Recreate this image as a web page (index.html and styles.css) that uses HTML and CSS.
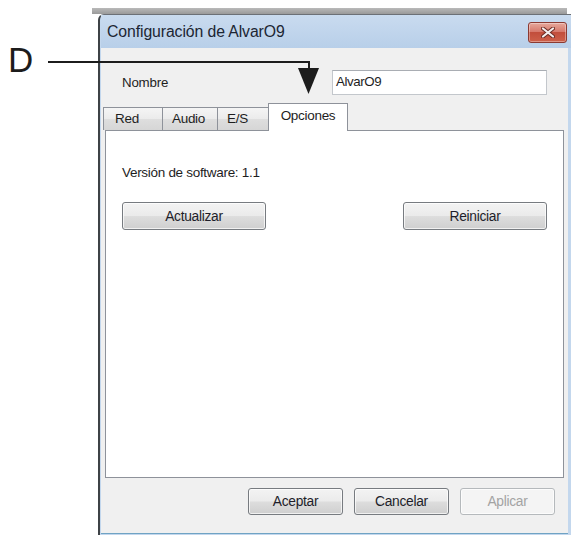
FILE: index.html
```html
<!DOCTYPE html>
<html lang="es">
<head>
<meta charset="utf-8">
<title>Configuración de AlvarO9</title>
<link rel="stylesheet" href="styles.css">
</head>
<body>
<div class="screen">
  <div class="behind-bar"></div>
  <div class="window">
    <div class="titlebar">
      <span class="title">Configuración de AlvarO9</span>
      <button class="close" aria-label="Cerrar">
        <svg width="14" height="11" viewBox="0 0 14 11">
          <path d="M2 1.5 L12 9.5 M12 1.5 L2 9.5" stroke="#6a2a22" stroke-width="4" stroke-linecap="round"/>
          <path d="M2 1.5 L12 9.5 M12 1.5 L2 9.5" stroke="#f4eeee" stroke-width="2.2" stroke-linecap="round"/>
        </svg>
      </button>
    </div>
    <div class="client">
      <div class="name-row">
        <label class="name-label">Nombre</label>
        <div class="textbox">AlvarO9</div>
      </div>
      <div class="tabs">
        <div class="tab tab-red">Red</div>
        <div class="tab tab-audio">Audio</div>
        <div class="tab tab-io">E/S</div>
        <div class="tab tab-active">Opciones</div>
      </div>
      <div class="panel">
        <p class="version">Versión de software: 1.1</p>
        <div class="panel-actions">
          <button class="btn btn-wide">Actualizar</button>
          <button class="btn btn-wide">Reiniciar</button>
        </div>
      </div>
      <div class="footer">
        <button class="btn btn-dialog">Aceptar</button>
        <button class="btn btn-dialog">Cancelar</button>
        <button class="btn btn-dialog btn-disabled">Aplicar</button>
      </div>
    </div>
    <div class="frame-bottom"></div>
  </div>

  <span class="callout-letter">D</span>
  <svg class="callout" width="571" height="535" viewBox="0 0 571 535">
    <path d="M48 62 H309 V70" fill="none" stroke="#1c1c1c" stroke-width="2"/>
    <polygon points="298,68 319,68 308.5,94" fill="#1c1c1c"/>
  </svg>
</div>
</body>
</html>
```

FILE: styles.css
```css
* {
  box-sizing: border-box;
}

html, body {
  margin: 0;
  padding: 0;
  background: #ffffff;
}

body {
  font-family: "Liberation Sans", Arial, sans-serif;
  font-size: 13.5px;
  color: #1e1e1e;
}

.screen {
  position: relative;
  width: 571px;
  height: 535px;
  overflow: hidden;
}

/* edge of the window lying behind the dialog */
.behind-bar {
  margin: 8px 0 0 92px;
  width: 475px;
  height: 6px;
  background: linear-gradient(#b9b9b9, #9a9a9a);
}

.window {
  margin-left: 98px;
  width: 478px;
  border-left: 2px solid #3e4246;
  border-top: 1px solid #6c7076;
  border-top-left-radius: 6px;
  background: #c3d7ed;
  padding: 0 8px 0 1px;
}

.titlebar {
  height: 33px;
  display: flex;
  align-items: center;
  justify-content: space-between;
  padding: 1px 9px 0 6px;
  margin-right: -8px;
  background: linear-gradient(#c9dbef, #b8cfe9);
}

.title {
  font-size: 15.8px;
  color: #1c2633;
  letter-spacing: -0.1px;
}

.close {
  width: 39px;
  height: 21px;
  border: 1px solid #8b3a32;
  border-radius: 3px;
  padding: 0;
  display: flex;
  align-items: center;
  justify-content: center;
  background: linear-gradient(#e6a89c 0%, #d77a6d 45%, #c24e3c 50%, #cd604a 100%);
  box-shadow: inset 0 0 0 1px rgba(255, 255, 255, 0.35);
}

.client {
  height: 485px;
  background: #f0f0f0;
  display: flex;
  flex-direction: column;
}

.name-row {
  display: flex;
  align-items: center;
  margin-top: 22px;
  padding-left: 21px;
}

.name-label {
  width: 210px;
  font-size: 13.3px;
  letter-spacing: -0.2px;
}

.textbox {
  width: 215px;
  height: 25px;
  border: 1px solid #c3c7cc;
  border-top-color: #a9adb3;
  background: #ffffff;
  padding: 3px 0 0 3px;
  font-size: 13.3px;
  letter-spacing: -0.4px;
}

.tabs {
  display: flex;
  align-items: flex-end;
  height: 27px;
  margin: 8px 0 0 2px;
  position: relative;
  z-index: 1;
}

.tab {
  height: 23px;
  width: 59px;
  border: 1px solid #8e929a;
  border-bottom: none;
  border-right: none;
  background: linear-gradient(#f5f5f5 0%, #ebebeb 50%, #dedede 52%, #d6d6d6 100%);
  padding: 3px 0 0 9px;
  letter-spacing: -0.3px;
}

.tab-red {
  padding-left: 11px;
}

.tab-audio {
  width: 55px;
}

.tab-io {
  width: 53px;
}

.tab-active {
  width: 80px;
  height: 28px;
  margin-left: -2px;
  margin-bottom: -1px;
  border-right: 1px solid #8e929a;
  background: #ffffff;
  padding: 4px 0 0 0;
  text-align: center;
}

.panel {
  height: 348px;
  margin: 0 4px;
  border: 1px solid #8e929a;
  background: #ffffff;
  padding: 34px 16px 0 16px;
}

.version {
  margin: 0;
  line-height: 16px;
  letter-spacing: -0.3px;
}

.panel-actions {
  display: flex;
  justify-content: space-between;
  margin-top: 21px;
}

.btn {
  font-family: "Liberation Sans", Arial, sans-serif;
  font-size: 13.8px;
  color: #1e1e2a;
  letter-spacing: -0.3px;
  border: 1px solid #777b80;
  border-radius: 3px;
  background: linear-gradient(#f3f3f3 0%, #ebebeb 48%, #dddddd 52%, #cfcfcf 100%);
  box-shadow: inset 0 0 0 1px rgba(255, 255, 255, 0.7);
  padding: 0;
}

.btn-wide {
  width: 144px;
  height: 28px;
}

.footer {
  display: flex;
  justify-content: flex-end;
  gap: 11px;
  margin-top: 10px;
  padding-right: 13px;
}

.btn-dialog {
  width: 95px;
  height: 27px;
}

.btn-disabled {
  color: #a3a3a3;
  border-color: #b5b9bc;
  background: #f4f4f4;
}

.frame-bottom {
  height: 4px;
  border-top: 1px solid #6fa3c4;
  background: #c3d7ed;
}

/* annotation drawn over the dialog */
.callout-letter {
  position: absolute;
  left: 8px;
  top: 42px;
  font-size: 35px;
  line-height: 35px;
  color: #1c1c1c;
}

.callout {
  position: absolute;
  left: 0;
  top: 0;
  pointer-events: none;
}
```
